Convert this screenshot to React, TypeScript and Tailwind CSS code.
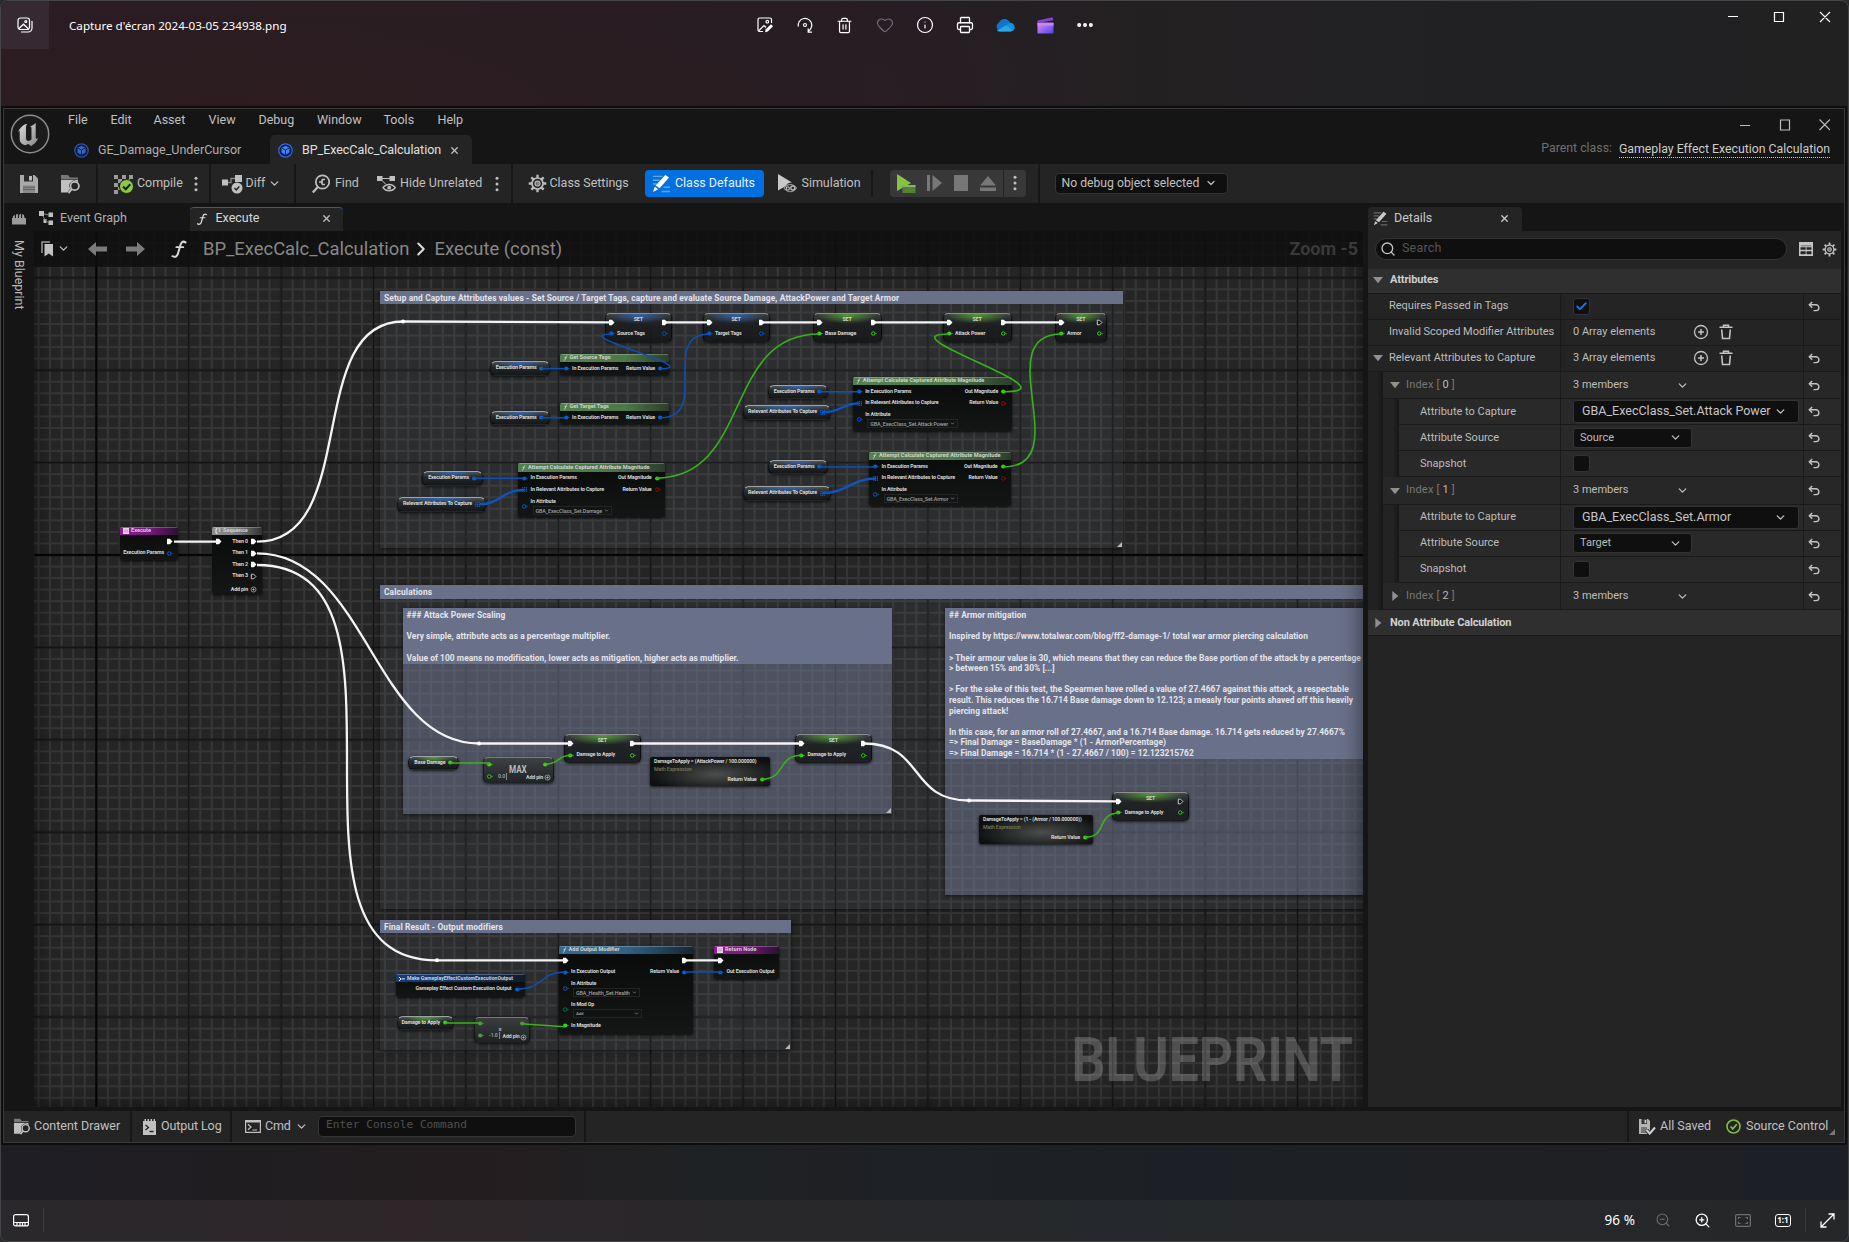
import React from "react";
import {
  ChevronDown,
  ChevronRight,
  Heart,
  Info,
  Printer,
  Trash2,
  ZoomIn,
  ZoomOut,
  Search,
  X,
  Ellipsis,
  Check,
} from "lucide-react";

/* ------------------------------------------------------------------ */
/* Graph data: every node lives at its own place on the free canvas    */
/* ------------------------------------------------------------------ */

const BLUE = "#0a5fd6";
const GREEN = "#35d510";
const RED = "#8e0b0b";
const TEAL = "#06735f";

type PinKind = "exec" | "execOpen" | "dot" | "open" | "array" | "add";

function Pin({ kind, color = "#fff" }: { kind: PinKind; color?: string }) {
  return (
    <svg className="h-[7px] w-[7px] shrink-0 overflow-visible" viewBox="0 0 7 7">
      {kind === "exec" && <path d="M1 .8h2.900L6.500 3.5 3.900 6.200H1z" fill="#fff" />}
      {kind === "execOpen" && <path d="M1.3 1.2h2.3L5.9 3.5 3.6 5.8H1.3z" fill="#111" stroke="#ddd" strokeWidth=".9" />}
      {kind === "dot" && (
        <>
          <circle cx="3.2" cy="3.5" r="2.1" fill={color} />
          <path d="M5.4 2.4 6.9 3.5 5.4 4.6z" fill={color} />
        </>
      )}
      {kind === "open" && (
        <>
          <circle cx="3.2" cy="3.5" r="1.7" fill="#0a0a0a" stroke={color} strokeWidth="1" />
          <path d="M5.5 2.6 6.9 3.5 5.5 4.4z" fill={color} />
        </>
      )}
      {kind === "array" &&
        [1.2, 3, 4.8].map((x) => [1.7, 3.4, 5.1].map((y) => <rect key={x + "-" + y} x={x} y={y - 0.5} width="1.2" height="1.2" fill={color} />))}
      {kind === "add" && (
        <>
          <circle cx="3.5" cy="3.5" r="2.5" fill="none" stroke="#bbb" strokeWidth=".7" />
          <path d="M3.5 2.2v2.6M2.2 3.5h2.6" stroke="#bbb" strokeWidth=".7" />
        </>
      )}
    </svg>
  );
}

function Box({
  x,
  y,
  w,
  h,
  className,
  children,
}: {
  x: number;
  y: number;
  w: number;
  h: number;
  className?: string;
  children?: React.ReactNode;
}) {
  return (
    <div className={"absolute " + (className ?? "")} style={{ left: x, top: y, width: w, height: h }}>
      {children}
    </div>
  );
}

type Side = { kind: PinKind; color?: string; label?: string };

function Row({ l, r }: { l?: Side; r?: Side }) {
  return (
    <div className="flex h-[11.6px] items-center justify-between pr-[4.5px] pl-[3px]">
      <span className="flex items-center gap-[2.5px]">
        {l && <Pin kind={l.kind} color={l.color} />}
        {l?.label}
      </span>
      <span className="flex items-center gap-[2px]">
        {r?.label}
        {r && <Pin kind={r.kind} color={r.color} />}
      </span>
    </div>
  );
}

function FieldRow({ label, value, color, wide }: { label: string; value: string; color: string; wide?: boolean }) {
  return (
    <div className="flex h-[21px] items-center gap-[2.5px] pl-[3px]">
      <Pin kind="open" color={color} />
      <div className="flex flex-col">
        <span className="h-[9px] leading-[9px]">{label}</span>
        <span
          className={
            "ml-[2px] flex h-[9px] items-center justify-between gap-[2px] border border-[#232423] px-[2px] font-medium text-[#a0a0a0] " +
            (wide ? "w-[69px] text-[4.4px]" : "text-[5.4px]")
          }
        >
          {value}
          <ChevronDown size={5} strokeWidth={3} />
        </span>
      </div>
    </div>
  );
}

const headerTones = {
  green: "bg-[linear-gradient(90deg,#54804f_0%,#4d7849_60%,#2c3d2a_100%)]",
  blue: "bg-[linear-gradient(90deg,#356a8f_0%,#2f6488_50%,#17262f_100%)]",
  navy: "bg-[linear-gradient(90deg,#173c7c_0%,#143263_60%,#101a2a_100%)]",
  purple: "bg-[linear-gradient(90deg,#8b1c93_0%,#79177f_50%,#2a112d_100%)]",
  gray: "bg-[linear-gradient(90deg,#8d8d8d_0%,#7d7d7d_50%,#323232_100%)]",
};

function FnNode({
  x,
  y,
  w,
  h,
  title,
  tone,
  icon = "f",
  children,
}: {
  x: number;
  y: number;
  w: number;
  h: number;
  title: string;
  tone: keyof typeof headerTones;
  icon?: "f" | "event" | "seq" | "make";
  children: React.ReactNode;
}) {
  return (
    <Box
      x={x}
      y={y}
      w={w}
      h={h}
      className="overflow-hidden rounded-[2px] bg-[linear-gradient(180deg,#090b0a,#131614)] font-bold text-[#d8d8d8] shadow-[0_1px_3px_rgba(0,0,0,0.8)]"
    >
      <div
        className={
          "mb-[1px] flex h-[8.3px] items-center gap-[2px] border-t border-white/25 pl-[3px] text-[#d0d4d0] " +
          (icon === "make" ? "text-[5.1px] " : "text-[5.6px] ") +
          headerTones[tone]
        }
      >
        {icon === "f" && (
          <svg className="h-[6px] w-[5px]" viewBox="0 0 5 6">
            <path d="M4.3.8C3.2.5 3 1.2 2.6 3S1.8 5.6.8 5.2M1.5 2.6h2.2" stroke="#cfd8cf" strokeWidth=".8" fill="none" />
          </svg>
        )}
        {icon === "event" && (
          <svg className="h-[6px] w-[6px]" viewBox="0 0 6 6">
            <path d="M0 0h6v6H0z" fill="#e6d6e8" />
            <path d="M.8 2h4.4M.8 3.8h4.4" stroke="#a86fae" strokeWidth=".6" />
          </svg>
        )}
        {icon === "seq" && (
          <svg className="h-[6px] w-[6px]" viewBox="0 0 6 6">
            <path d="M2.6.8H1v4.4h1.6M3.6 1h1.8M3.6 3h1.8" stroke="#eee" strokeWidth="1" fill="none" />
          </svg>
        )}
        {icon === "make" && (
          <svg className="h-[6px] w-[6px]" viewBox="0 0 6 6">
            <path d="M0 1l2 2-2 2M2.5 2.9H6" stroke="#eee" strokeWidth="1" fill="none" />
          </svg>
        )}
        <span className="leading-none whitespace-nowrap">{title}</span>
      </div>
      <div className="text-[5.3px] tracking-[-0.025em] whitespace-nowrap">{children}</div>
    </Box>
  );
}

function SetNode({
  x,
  y,
  w,
  label,
  color,
  openExec,
}: {
  x: number;
  y: number;
  w: number;
  label: string;
  color: string;
  openExec?: boolean;
}) {
  return (
    <Box
      x={x}
      y={y}
      w={w}
      h={28.5}
      className="overflow-hidden rounded-[5px] border border-black/60 border-t-white/50 bg-[linear-gradient(180deg,rgba(62,66,66,0.95)_0%,rgba(28,30,31,0.9)_35%,rgba(20,22,23,0.85)_100%)] text-[5.3px] font-bold tracking-[-0.025em] text-[#d8d8d8] shadow-[0_1px_3px_rgba(0,0,0,0.7)]"
    >
      <div
        className={
          "absolute inset-x-[3px] top-0 h-[10px] " +
          (color === BLUE
            ? "bg-[radial-gradient(ellipse_at_top,rgba(50,105,190,0.85),transparent_70%)]"
            : "bg-[radial-gradient(ellipse_at_top,rgba(85,175,50,0.85),transparent_70%)]")
        }
      />
      <div className="absolute inset-x-0 top-[1.5px] text-center leading-[6px] text-[#d5d5d5]">SET</div>
      <div className="relative -mx-[1px] pt-[2.6px] whitespace-nowrap">
        <Row l={{ kind: "exec" }} r={{ kind: openExec ? "execOpen" : "exec" }} />
        <Row l={{ kind: "dot", color, label }} r={{ kind: "open", color }} />
      </div>
    </Box>
  );
}

function Pill({ x, y, w, label, color, array }: { x: number; y: number; w: number; label: string; color: string; array?: boolean }) {
  return (
    <Box
      x={x}
      y={y}
      w={w}
      h={14.5}
      className="flex items-center justify-end gap-[1.5px] rounded-[6px] border border-black/50 border-t-white/60 bg-[linear-gradient(180deg,#4a4f52_0%,#24282a_40%,#14181a_100%)] pr-[4px] text-[5.3px] font-bold tracking-[-0.025em] whitespace-nowrap text-[#dcdcdc] shadow-[0_1px_3px_rgba(0,0,0,0.7)]"
    >
      <div
        className={
          "absolute inset-x-[6px] top-0 h-[7px] " +
          (color === BLUE
            ? "bg-[radial-gradient(ellipse_at_top,rgba(50,105,190,0.85),transparent_70%)]"
            : "bg-[radial-gradient(ellipse_at_top,rgba(85,175,50,0.85),transparent_70%)]")
        }
      />
      <span className="relative">{label}</span>
      <Pin kind={array ? "array" : "dot"} color={color} />
    </Box>
  );
}

function MathNode({ x, y, w, title }: { x: number; y: number; w: number; title: string }) {
  return (
    <Box
      x={x}
      y={y}
      w={w}
      h={29}
      className="flex flex-col rounded-[2px] bg-[radial-gradient(ellipse_at_55%_60%,#4b4e4c_0%,#2a2d2b_38%,#0e100f_75%)] px-[4px] pt-[1px] text-[5.3px] font-bold tracking-[-0.025em] whitespace-nowrap text-[#d8d8d8] shadow-[0_1px_3px_rgba(0,0,0,0.8)]"
    >
      <span className="text-[5.1px] leading-[7px]">{title}</span>
      <span className="leading-[8px] font-medium text-[#77775a]">Math Expression</span>
      <span className="mt-[2.5px] flex items-center justify-end gap-[2px] leading-[7px]">
        Return Value
        <Pin kind="dot" color={GREEN} />
      </span>
    </Box>
  );
}

function OpNode({
  x,
  y,
  w,
  h,
  symbol,
  value,
  small,
}: {
  x: number;
  y: number;
  w: number;
  h: number;
  symbol: string;
  value: string;
  small?: boolean;
}) {
  return (
    <Box
      x={x}
      y={y}
      w={w}
      h={h}
      className="overflow-hidden rounded-[5px] border border-black/50 border-t-white/40 bg-[linear-gradient(180deg,rgba(60,63,64,0.9),rgba(30,33,34,0.92))] text-[5.2px] font-bold tracking-[-0.025em] whitespace-nowrap text-[#d0d0d0] shadow-[0_1px_3px_rgba(0,0,0,0.7)]"
    >
      <div className={"absolute inset-0 flex items-center justify-center leading-none text-[#b9b9b9] " + (small ? "pt-[1px] pr-[3px] text-[8px]" : "pr-[1px] text-[11px]")}>
        <span className="scale-x-[0.74]">{symbol}</span>
      </div>
      <div className="relative -mx-[1px] pt-[0.5px]">
        <Row l={{ kind: "dot", color: small ? "#4f9a3c" : GREEN }} r={{ kind: "dot", color: small ? "#4f9a3c" : GREEN }} />
        <div className="flex h-[12px] items-center pr-[3px] pl-[3px]">
          <Pin kind={small ? "dot" : "open"} color={small ? "#4f9a3c" : GREEN} />
          <span className="ml-[5px] border-r border-[#888] pr-[1px] leading-[7px] font-medium text-[#aaa]">{value}</span>
          <span className="ml-auto flex items-center gap-[0.5px] pt-[3px]">
            Add pin <Pin kind="add" />
          </span>
        </div>
      </div>
    </Box>
  );
}

function Comment({
  x,
  y,
  w,
  h,
  head,
  strong,
  lines,
}: {
  x: number;
  y: number;
  w: number;
  h: number;
  head: number;
  strong?: boolean;
  lines: string[];
}) {
  return (
    <Box
      x={x}
      y={y}
      w={w}
      h={h}
      className={"shadow-[0_1px_4px_rgba(0,0,0,0.6)] " + (strong ? "bg-[rgba(112,120,145,0.5)]" : "bg-[rgba(105,115,140,0.1)]")}
    >
      <div
        className={
          "overflow-hidden bg-[#697089] pt-[2.2px] pl-[4px] text-[8.4px] leading-[10.6px] font-bold whitespace-pre text-[#e4e5ea] " +
          (strong ? "tracking-[0.007em]" : "tracking-[0.014em]")
        }
        style={{ height: head }}
      >
        {lines.map((t, i) => (
          <div key={i} className="h-[10.6px]">
            {t}
          </div>
        ))}
      </div>
      <svg className="absolute right-[1px] bottom-[1px] h-[5px] w-[5px]" viewBox="0 0 5 5">
        <path d="M5 0v5H0z" fill="#b8b8b8" />
      </svg>
    </Box>
  );
}

function Grid() {
  return (
    <svg className="absolute inset-0 h-full w-full" width="1329" height="876">
      <defs>
        <pattern id="minor" x="62.3" y="324" width="11.55" height="11.55" patternUnits="userSpaceOnUse">
          <path d="M0 0H11.55M0 0V11.55M0 11.55H11.55M11.55 0V11.55" stroke="#363636" strokeWidth="2" />
        </pattern>
        <pattern id="major" x="16.1" y="277.8" width="92.4" height="92.4" patternUnits="userSpaceOnUse">
          <path d="M46.2 0V92.4M0 46.2H92.4" stroke="#121212" strokeWidth="1.8" />
        </pattern>
      </defs>
      <rect width="1329" height="876" fill="#252525" />
      <rect width="1329" height="876" fill="url(#minor)" />
      <rect width="1329" height="876" fill="url(#major)" />
      <path d="M62.3 0V876M0 324H1329" stroke="#050505" strokeWidth="2" />
    </svg>
  );
}

const execWires = [
  "M174 541.7H219",
  "M257 541.7C361 541.7 303 321.5 403 321.5L612 322.3",
  "M257 553.3C366 553.3 374 743.5 479 743.5H571",
  "M257 565C437 565 257 960.3 437 960.3H565",
  "M664 322.3H710",
  "M762 322.3H819",
  "M874 322.3H949",
  "M1004 322.3H1062",
  "M632 743.5H802",
  "M864 743.5C925 743.5 908 800.5 969 800.5L1119 801.3",
  "M685 960.3H721",
];
const greenWires = [
  "M656 478C752 478 723 334 819 334",
  "M1004 391.7C1078 391.7 882 334 949 334",
  "M1003 467C1078 467 987 334 1062 334",
  "M450 763H490",
  "M546 764C560 764 557 755.3 571 755.3",
  "M761 779.3C787 779.3 776 755.3 802 755.3",
  "M1085 837.3C1108 837.3 1096 813 1119 813",
  "M445 1023H480",
  "M524 1024L565 1026.7",
];
const blueWires = [
  "M660 368.7C708 368.7 564 334 612 334",
  "M660 417.8C712 417.8 658 334 710 334",
  "M542 368.6H566",
  "M542 417.8H566",
  "M474 478.2H524",
  "M819 391.7H859",
  "M819 467H876",
  "M518 989C543 989 540 972 565 972",
  "M685 972H721",
];
const thickBlueWires = [
  "M480 504.3C500 504.3 502 490 524 490",
  "M823 412.3C841 412.3 842 403.4 859 403.4",
  "M823 493C846 493 852 478.5 876 478.5",
];

function Wires() {
  return (
    <svg className="absolute top-0 left-0 h-[1242px] w-[1849px]" viewBox="0 0 1849 1242" fill="none">
      {blueWires.map((d) => (
        <path key={d} d={d} stroke="#0b51b4" strokeWidth="1.5" />
      ))}
      {thickBlueWires.map((d) => (
        <path key={d} d={d} stroke="#0b56c4" strokeWidth="2.4" />
      ))}
      {greenWires.map((d) => (
        <path key={d} d={d} stroke="#36b416" strokeWidth="1.6" />
      ))}
      {execWires.map((d) => (
        <path key={d} d={d} stroke="#f4f4f4" strokeWidth="2.3" />
      ))}
      <g fill="#fff">
        <circle cx="403" cy="321.5" r="2" />
        <circle cx="479" cy="743.5" r="2" />
        <circle cx="437" cy="960.3" r="2" />
        <circle cx="969" cy="800.5" r="2" />
      </g>
    </svg>
  );
}

function AttemptNode({ x, y, w, h, attr }: { x: number; y: number; w: number; h: number; attr: string }) {
  return (
    <FnNode x={x} y={y} w={w} h={h} tone="green" title="Attempt Calculate Captured Attribute Magnitude">
      <Row l={{ kind: "dot", color: BLUE, label: "In Execution Params" }} r={{ kind: "dot", color: GREEN, label: "Out Magnitude" }} />
      <Row l={{ kind: "array", color: BLUE, label: "In Relevant Attributes to Capture" }} r={{ kind: "open", color: RED, label: "Return Value" }} />
      <FieldRow label="In Attribute" value={attr} color={BLUE} />
    </FnNode>
  );
}

function GraphCanvas() {
  return (
    <div className="relative h-[876px] overflow-hidden bg-[#252525]">
      <Grid />
      {/* node space */}
      <div className="absolute -top-[231px] -left-[34px] h-[1242px] w-[1849px]">
        <Comment
          x={380}
          y={291}
          w={743}
          h={257}
          head={13}
          lines={["Setup and Capture Attributes values - Set Source / Target Tags, capture and evaluate Source Damage, AttackPower and Target Armor"]}
        />
        <Comment x={380} y={585} w={1060} h={324} head={13.5} lines={["Calculations"]} />
        <Comment
          x={402.5}
          y={608}
          w={489.5}
          h={206}
          head={55.5}
          strong
          lines={[
            "### Attack Power Scaling",
            "",
            "Very simple, attribute acts as a percentage multiplier.",
            "",
            "Value of 100 means no modification, lower acts as mitigation, higher acts as multiplier.",
          ]}
        />
        <Comment
          x={945}
          y={608}
          w={470}
          h={287}
          head={151}
          strong
          lines={[
            "## Armor mitigation",
            "",
            "Inspired by https://www.totalwar.com/blog/ff2-damage-1/ total war armor piercing calculation",
            "",
            "> Their armour value is 30, which means that they can reduce the Base portion of the attack by a percentage",
            "> between 15% and 30% [...]",
            "",
            "> For the sake of this test, the Spearmen have rolled a value of 27.4667 against this attack, a respectable",
            "result. This reduces the 16.714 Base damage down to 12.123; a measly four points shaved off this heavily",
            "piercing attack!",
            "",
            "In this case, for an armor roll of 27.4667, and a 16.714 Base damage. 16.714 gets reduced by 27.4667%",
            "=> Final Damage = BaseDamage * (1 - ArmorPercentage)",
            "=> Final Damage = 16.714 * (1 - 27.4667 / 100) = 12.123215762",
          ]}
        />
        <Comment x={380} y={920} w={411} h={130} head={13} lines={["Final Result - Output modifiers"]} />

        <FnNode x={120} y={526.5} w={57.5} h={33.5} tone="purple" icon="event" title="Execute">
          <Row r={{ kind: "exec" }} />
          <Row r={{ kind: "open", color: BLUE, label: "Execution Params" }} />
        </FnNode>
        <FnNode x={212} y={526.5} w={49.5} h={67.5} tone="gray" icon="seq" title="Sequence">
          <Row l={{ kind: "exec" }} r={{ kind: "exec", label: "Then 0" }} />
          <Row r={{ kind: "exec", label: "Then 1" }} />
          <Row r={{ kind: "exec", label: "Then 2" }} />
          <Row r={{ kind: "execOpen", label: "Then 3" }} />
          <div className="pt-[1.5px]">
            <Row r={{ kind: "add", label: "Add pin" }} />
          </div>
        </FnNode>

        <SetNode x={604.5} y={313} w={67.5} label="Source Tags" color={BLUE} />
        <SetNode x={702.5} y={313} w={67} label="Target Tags" color={BLUE} />
        <SetNode x={812.5} y={313} w={69} label="Base Damage" color={GREEN} />
        <SetNode x={942.5} y={313} w={69} label="Attack Power" color={GREEN} />
        <SetNode x={1054.5} y={313} w={52.5} label="Armor" color={GREEN} openExec />

        <Pill x={489.5} y={361} w={60.5} label="Execution Params" color={BLUE} />
        <Pill x={489.5} y={410.5} w={60.5} label="Execution Params" color={BLUE} />
        <Pill x={421.5} y={471} w={61} label="Execution Params" color={BLUE} />
        <Pill x={397} y={497} w={88.5} label="Relevant Attributes To Capture" color={BLUE} array />
        <Pill x={767.5} y={384.5} w={60.5} label="Execution Params" color={BLUE} />
        <Pill x={742.5} y={405} w={88} label="Relevant Attributes To Capture" color={BLUE} array />
        <Pill x={767.5} y={459.5} w={60.5} label="Execution Params" color={BLUE} />
        <Pill x={742.5} y={486} w={88} label="Relevant Attributes To Capture" color={BLUE} array />

        <FnNode x={559.5} y={353.5} w={109} h={21.5} tone="green" title="Get Source Tags">
          <Row l={{ kind: "dot", color: BLUE, label: "In Execution Params" }} r={{ kind: "dot", color: BLUE, label: "Return Value" }} />
        </FnNode>
        <FnNode x={559.5} y={402.5} w={109} h={21.5} tone="green" title="Get Target Tags">
          <Row l={{ kind: "dot", color: BLUE, label: "In Execution Params" }} r={{ kind: "dot", color: BLUE, label: "Return Value" }} />
        </FnNode>
        <AttemptNode x={518} y={463.3} w={147} h={54} attr="GBA_ExecClass_Set.Damage" />
        <AttemptNode x={852.7} y={376.5} w={159} h={54.5} attr="GBA_ExecClass_Set.Attack Power" />
        <AttemptNode x={869} y={451.5} w={142} h={54.5} attr="GBA_ExecClass_Set.Armor" />

        <Pill x={408} y={755.5} w={51} label="Base Damage" color={GREEN} />
        <OpNode x={483} y={757} w={70.5} h={25.5} symbol="MAX" value="0.0" />
        <SetNode x={564} y={734.3} w={76.5} label="Damage to Apply" color={GREEN} />
        <MathNode x={650} y={757} w={119.5} title="DamageToApply = (AttackPower / 100.000000)" />
        <SetNode x={795} y={734.3} w={76.5} label="Damage to Apply" color={GREEN} />
        <MathNode x={979} y={815} w={114} title="DamageToApply = (1 - (Armor / 100.000000))" />
        <SetNode x={1112.3} y={792} w={76.5} label="Damage to Apply" color={GREEN} openExec />

        <FnNode x={396} y={974} w={129} h={22.5} tone="navy" icon="make" title="Make GameplayEffectCustomExecutionOutput">
          <Row r={{ kind: "dot", color: BLUE, label: "Gameplay Effect Custom Execution Output" }} />
        </FnNode>
        <Pill x={396.5} y={1015.7} w={57} label="Damage to Apply" color={GREEN} />
        <OpNode x={474} y={1016.5} w={56} h={26} symbol="×" value="-1.0" small />
        <FnNode x={558.5} y={945.5} w={134} h={88} tone="blue" title="Add Output Modifier">
          <Row l={{ kind: "exec" }} r={{ kind: "exec" }} />
          <Row l={{ kind: "dot", color: BLUE, label: "In Execution Output" }} r={{ kind: "dot", color: BLUE, label: "Return Value" }} />
          <FieldRow label="In Attribute" value="GBA_Health_Set.Health" color={BLUE} />
          <FieldRow label="In Mod Op" value="Add" color={TEAL} wide />
          <Row l={{ kind: "dot", color: GREEN, label: "In Magnitude" }} />
        </FnNode>
        <FnNode x={714} y={945.5} w={65} h={33.5} tone="purple" icon="event" title="Return Node">
          <Row l={{ kind: "exec" }} />
          <Row l={{ kind: "dot", color: BLUE, label: "Out Execution Output" }} />
        </FnNode>
        <Wires />
      </div>

      <div className="pointer-events-none absolute inset-0 shadow-[inset_0_0_22px_rgba(0,0,0,0.55)]" />
      <div className="absolute right-[10px] bottom-[11px] origin-right scale-x-[0.861] text-[62px] leading-[73px] font-bold whitespace-nowrap text-white/20">
        BLUEPRINT
      </div>

      {/* breadcrumb overlay */}
      <div className="absolute inset-x-0 top-0 flex h-[36px] items-center bg-[rgba(13,13,13,0.82)] pb-[1px] text-[18.4px] text-[#888]">
        <div className="flex w-[45px] items-center gap-[4px] pl-[7px]">
          <svg width="12" height="16" viewBox="0 0 12 16">
            <path d="M1 12V1h8" stroke="#999" strokeWidth="1.5" fill="none" />
            <path d="M3.5 3H12v12.500l-4.200-3-4.300 3z" fill="#c0c0c0" />
          </svg>
          <ChevronDown size={13} strokeWidth={2.5} className="text-[#bbb]" />
        </div>
        <div className="flex w-[87px] items-center gap-[19px] pl-[9px]">
          <svg width="19" height="14" viewBox="0 0 19 14">
            <path d="M0 7 8 0v4.500h11v5H8V14z" fill="#7b7b7b" />
          </svg>
          <svg width="19" height="14" viewBox="0 0 19 14">
            <path d="M19 7l-8-7v4.500H0v5h11V14z" fill="#7b7b7b" />
          </svg>
        </div>
        <div className="w-[37px] pl-[4px]">
          <FnGlyph size={18} />
        </div>
        <span className="w-[207px] whitespace-nowrap">BP_ExecCalc_Calculation</span>
        <span className="flex w-[24.500px] text-[#ddd]">
          <ChevronRight size={22} strokeWidth={2.2} />
        </span>
        <span className="whitespace-nowrap">Execute (const)</span>
        <span className="mr-[5px] ml-auto text-[18px] font-bold text-[#3a3a3a]">Zoom -5</span>
      </div>
    </div>
  );
}

/* ------------------------------------------------------------------ */
/* Small glyphs                                                        */
/* ------------------------------------------------------------------ */

function FnGlyph({ size }: { size: number }) {
  return (
    <svg width={size} height={size} viewBox="0 0 18 18" fill="none" stroke="#d8d8d8" strokeLinecap="round">
      <path d="M15.500 2.400C12.500.4 11 2.500 10 6.500L8.300 12.500C7.300 16.500 5.500 17.800 2.500 16.200" strokeWidth="2" />
      <path d="M6.300 7.200h7" strokeWidth="1.700" />
    </svg>
  );
}

function ClassIcon({ dim }: { dim?: boolean }) {
  return (
    <svg width="15" height="15" viewBox="0 0 15 15" className={dim ? "opacity-75" : ""}>
      <circle cx="7.500" cy="7.500" r="6.700" fill="#0b1b3d" stroke="#2d6be8" strokeWidth="1.200" />
      <path d="M7.500 2.800l4 2v4.800l-4 2.400-4-2.400V4.800z" fill="#3f82ff" />
      <path d="M3.700 5l3.800 2 3.800-2M7.500 7v4.800" stroke="#0b1b3d" strokeWidth=".9" fill="none" />
    </svg>
  );
}

function Dots() {
  return (
    <svg width="4" height="16" viewBox="0 0 4 16" fill="#c0c0c0">
      <circle cx="2" cy="2.200" r="1.500" />
      <circle cx="2" cy="8" r="1.500" />
      <circle cx="2" cy="13.800" r="1.500" />
    </svg>
  );
}

function Gear({ size }: { size: number }) {
  return (
    <svg width={size} height={size} viewBox="0 0 20 20" fill="none" stroke="#c0c0c0">
      <circle cx="10" cy="10" r="5.800" strokeWidth="1.800" />
      <circle cx="10" cy="10" r="2.600" strokeWidth="1.200" fill="#777" />
      <path
        d="M10 .8v3.200M10 16v3.200M.8 10H4M16 10h3.200M3.500 3.500l2.200 2.200M14.300 14.300l2.200 2.200M3.500 16.500l2.200-2.200M14.300 5.700l2.200-2.200"
        strokeWidth="2.400"
      />
    </svg>
  );
}

function FolderSearch({ size }: { size: number }) {
  return (
    <svg width={size} height={size} viewBox="0 0 20 20">
      <path d="M0 1h7l2 2.500h8V5H0z" fill="#777" />
      <path d="M0 5.800h17v2.600a5 5 0 0 0-7.800 6.200L6.500 18.500H0z" fill="#c0c0c0" />
      <circle cx="13.700" cy="12" r="4.200" fill="none" stroke="#c0c0c0" strokeWidth="1.700" />
      <path d="M10.700 15.200 7.500 19" stroke="#c0c0c0" strokeWidth="2" />
    </svg>
  );
}

function PencilLines({ size, bright }: { size: number; bright?: boolean }) {
  const c = bright ? "#fff" : "#c8c8c8";
  const l = bright ? "#5fa6f5" : "#666";
  return (
    <svg width={size} height={size} viewBox="0 0 20 20">
      <path d="M1 2.500h10M1 6.500h7M12 14h7M10 18.500h9M1 10.500h4" stroke={l} strokeWidth="1.500" />
      <path d="M14 1l4 2.800L8 15l-4.200-2.800z" fill={c} />
      <path d="M3 13.500 6.500 16 1 19z" fill={c} />
    </svg>
  );
}

function Floppy({ size }: { size: number }) {
  return (
    <svg width={size} height={size} viewBox="0 0 18 18">
      <path d="M0 0h14.500L18 3.500V18H0z" fill="#aaa" />
      <path d="M4 0h9v6.500H4z" fill="#2a2a2a" />
      <path d="M9 1h3v4.500H9z" fill="#bbb" />
      <path d="M3 10.500h12V18H3z" fill="#8a8a8a" />
      <path d="M3 12.200h12M3 14.500h12" stroke="#555" strokeWidth=".8" />
    </svg>
  );
}

function Tri({ open }: { open?: boolean }) {
  return (
    <svg width="10" height="10" viewBox="0 0 10 10" fill="#909090" className="shrink-0">
      {open ? <path d="M0 2h10L5 8.300z" /> : <path d="M2.300 0v10L8.300 5z" />}
    </svg>
  );
}

function Undo() {
  return (
    <svg width="12" height="11" viewBox="0 0 12 11" fill="none" stroke="#c4c4c4" strokeWidth="1.400">
      <path d="M1.500 3.800H8a2.900 2.900 0 0 1 0 5.800H5.500" />
      <path d="M4.200.9 1.300 3.800l2.900 2.900" />
    </svg>
  );
}

/* ------------------------------------------------------------------ */
/* Details panel                                                       */
/* ------------------------------------------------------------------ */

type DetailRow = {
  h: string;
  level: 0 | 1 | 2;
  label: React.ReactNode;
  arrow?: "open" | "closed";
  value: React.ReactNode;
  undo?: boolean;
};

function Combo({ text, big }: { text: string; big?: boolean }) {
  return big ? (
    <div className="flex h-[23px] w-[226px] items-center justify-between rounded-[3px] border border-[#333] bg-[#0f0f0f] pr-[11px] pl-[8px] text-[12.5px] whitespace-nowrap text-[#c6c6c6]">
      {text}
      <ChevronDown size={13} strokeWidth={2.4} className="shrink-0" />
    </div>
  ) : (
    <div className="flex h-[20px] w-[119px] items-center justify-between rounded-[3px] border border-[#333] bg-[#0f0f0f] pr-[9px] pl-[6px]">
      {text}
      <ChevronDown size={13} strokeWidth={2.4} />
    </div>
  );
}

function CheckBox({ on }: { on?: boolean }) {
  return (
    <div className="flex h-[17px] w-[17px] items-center justify-center rounded-[3px] border border-[#333] bg-[#0f0f0f]">
      {on && <Check size={13} strokeWidth={3.4} className="text-[#0f7be8]" />}
    </div>
  );
}

function ArrayValue({ n }: { n: number }) {
  return (
    <div className="flex items-center">
      <span className="w-[119.500px]">{n} Array elements</span>
      <svg width="16" height="16" viewBox="0 0 16 16" fill="none" stroke="#c4c4c4">
        <circle cx="8" cy="8" r="6.500" strokeWidth="1.300" />
        <path d="M8 5v6M5 8h6" strokeWidth="1.500" />
      </svg>
      <svg width="14" height="16" viewBox="0 0 14 16" fill="none" stroke="#c4c4c4" className="ml-[10px]">
        <path d="M.5 3.200h13M4.500 3V1.300h5V3" strokeWidth="1.500" />
        <path d="M2.700 5.500 3.500 14.500h7L11.300 5.500" strokeWidth="1.600" />
      </svg>
    </div>
  );
}

function Members() {
  return (
    <div className="flex items-center">
      <span className="w-[103px]">3 members</span>
      <ChevronDown size={13} strokeWidth={2.4} />
    </div>
  );
}

function IndexLabel({ n }: { n: number }) {
  return (
    <span className="tracking-[0.200px] text-[#777]">
      Index [ <span className="text-[#bbb]">{n}</span> ]
    </span>
  );
}

const detailRows: DetailRow[] = [
  { h: "h-[26.300px]", level: 0, label: "Requires Passed in Tags", value: <CheckBox on />, undo: true },
  { h: "h-[26px]", level: 0, label: "Invalid Scoped Modifier Attributes", value: <ArrayValue n={0} /> },
  { h: "h-[26px]", level: 0, label: "Relevant Attributes to Capture", arrow: "open", value: <ArrayValue n={3} />, undo: true },
  { h: "h-[27.500px]", level: 1, label: <IndexLabel n={0} />, arrow: "open", value: <Members />, undo: true },
  { h: "h-[26px]", level: 2, label: "Attribute to Capture", value: <Combo big text="GBA_ExecClass_Set.Attack Power" />, undo: true },
  { h: "h-[26px]", level: 2, label: "Attribute Source", value: <Combo text="Source" />, undo: true },
  { h: "h-[26px]", level: 2, label: "Snapshot", value: <CheckBox />, undo: true },
  { h: "h-[27.500px]", level: 1, label: <IndexLabel n={1} />, arrow: "open", value: <Members />, undo: true },
  { h: "h-[26px]", level: 2, label: "Attribute to Capture", value: <Combo big text="GBA_ExecClass_Set.Armor" />, undo: true },
  { h: "h-[26px]", level: 2, label: "Attribute Source", value: <Combo text="Target" />, undo: true },
  { h: "h-[26px]", level: 2, label: "Snapshot", value: <CheckBox />, undo: true },
  { h: "h-[27.700px]", level: 1, label: <IndexLabel n={2} />, arrow: "closed", value: <Members />, undo: true },
];

function Details() {
  return (
    <div className="flex w-[473px] flex-col">
      <div className="flex h-[24px] w-[154px] items-center rounded-t-[4px] bg-[#242424] pb-[2px] text-[12.500px] text-[#c8c8c8]">
        <span className="w-[26px] pl-[5px]">
          <PencilLines size={15} />
        </span>
        <span className="w-[105px]">Details</span>
        <X size={11} strokeWidth={3} />
      </div>
      <div className="flex h-[876px] flex-col bg-[#242424]">
        <div className="flex h-[37.500px] items-center pb-[1.500px] pl-[7px]">
          <div className="flex h-[22px] w-[412px] items-center rounded-full border border-[#343434] bg-[#0f0f0f] pl-[4px] text-[12.500px] text-[#555]">
            <Search size={16} strokeWidth={2} className="mr-[6px] text-[#c4c4c4]" />
            <span className="pb-[2px] tracking-[0.200px]">Search</span>
          </div>
          <svg width="14" height="14" viewBox="0 0 14 14" className="ml-[12px]">
            <path d="M0 0h14v14H0z" fill="#c4c4c4" />
            <path d="M1.800 3.800h10.400M1.800 5.500h4.600v2H1.800zM7.800 5.500h4.400v2H7.800zM1.800 9.500h4.600v2.500H1.800zM7.800 9.500h4.400v2.500H7.800z" fill="#242424" stroke="#242424" strokeWidth=".5" />
          </svg>
          <span className="ml-[9px]">
            <Gear size={15} />
          </span>
        </div>
        <div className="flex h-[25px] items-center gap-[7px] border-b border-[#1a1a1a] bg-[#2f2f2f] pb-[1px] pl-[5px] text-[11px] font-bold text-[#cfcfcf]">
          <Tri open />
          <span className="tracking-[-0.100px]">Attributes</span>
        </div>
        {detailRows.map((r, i) => (
          <div key={i} className={"flex text-[11px] text-[#bdbdbd] " + r.h}>
            {r.level > 0 && <div className="w-[15px] shrink-0 bg-[linear-gradient(90deg,#212121_60%,#171717)]" />}
            {r.level > 1 && <div className="w-[16px] shrink-0 bg-[linear-gradient(90deg,#232323_60%,#171717)]" />}
            <div className={"flex min-w-0 flex-1 border-b border-[#1a1a1a] " + (r.level > 1 ? "bg-[#292929]" : r.level > 0 ? "bg-[#272727]" : "bg-[#242424]")}>
              <div
                className={
                  "flex shrink-0 items-center gap-[6px] border-r border-[#1a1a1a] whitespace-nowrap " +
                  (r.level === 0 ? "w-[193px] pl-[5px]" : r.level === 1 ? "w-[178px] pl-[7px]" : "w-[162px] pl-[5px]")
                }
              >
                {r.arrow ? <Tri open={r.arrow === "open"} /> : <span className="w-[10px]" />}
                {r.label}
              </div>
              <div className="flex w-[243px] items-center border-r border-[#1a1a1a] pl-[12px]">{r.value}</div>
              <div className="flex flex-1 items-center pl-[4px]">{r.undo && <Undo />}</div>
            </div>
          </div>
        ))}
        <div className="flex h-[26px] items-center gap-[7px] border-b border-[#1a1a1a] bg-[#2f2f2f] pl-[5px] text-[11px] font-bold text-[#cfcfcf]">
          <Tri />
          <span className="tracking-[-0.150px]">Non Attribute Calculation</span>
        </div>
      </div>
    </div>
  );
}

/* ------------------------------------------------------------------ */
/* Unreal editor window                                                */
/* ------------------------------------------------------------------ */

function EditorHeader() {
  const menu: [string, string][] = [
    ["File", "w-[42.500px]"],
    ["Edit", "w-[43px]"],
    ["Asset", "w-[55px]"],
    ["View", "w-[50px]"],
    ["Debug", "w-[58.500px]"],
    ["Window", "w-[66.500px]"],
    ["Tools", "w-[54px]"],
    ["Help", "w-[40px]"],
  ];
  return (
    <div className="flex h-[55px] bg-[#151515]">
      <div className="w-[64px] pt-[5px] pl-[6px]">
        <svg width="40" height="40" viewBox="0 0 40 40">
          <defs>
            <linearGradient id="metal" x1="0" y1="0" x2="1" y2="1">
              <stop offset="0" stopColor="#ddd" />
              <stop offset="1" stopColor="#888" />
            </linearGradient>
          </defs>
          <circle cx="20" cy="20" r="18.700" fill="#1b1b1b" stroke="#8d8d8d" strokeWidth="1.500" />
          <path
            d="M7.800 18.800C9.500 13.500 14 10 17.500 9.700 15.800 11.300 16 12.500 16 14v10c0 2 1 3 2.500 3 1 0 2.300-.6 3-1.400V14.500c0-1.500-.6-1.800-1.500-2 2.600-.8 4.800-2.500 6-3.400-.4 1.500-.3 2.500-.3 4v10.500c0 1.500 1.500 1.500 2.500.4C26.500 28.500 23.500 30.500 21 32l-2.500-2-3.500 1.200c-3.500-1-5.300-3.200-5.300-6V16.500c-.8.5-1.400 1.300-1.900 2.300z"
            fill="url(#metal)"
          />
        </svg>
      </div>
      <div className="flex flex-1 flex-col">
        <div className="flex h-[26px] items-center pb-[4px] text-[12.500px] text-[#c0c0c0]">
          {menu.map(([t, w]) => (
            <span key={t} className={w}>
              {t}
            </span>
          ))}
        </div>
        <div className="flex h-[29px] text-[12.500px] text-[#b0b0b0]">
          <div className="flex w-[202px] items-center pt-[1px] pl-[6px]">
            <span className="w-[24px]">
              <ClassIcon dim />
            </span>
            GE_Damage_UnderCursor
          </div>
          <div className="flex w-[202px] items-center rounded-t-[5px] bg-[#242424] pt-[1px] pl-[8px] text-[#e0e0e0]">
            <span className="w-[24px]">
              <ClassIcon />
            </span>
            <span className="w-[147px] tracking-[-0.050px]">BP_ExecCalc_Calculation</span>
            <X size={11} strokeWidth={3} className="text-[#bbb]" />
          </div>
        </div>
      </div>
      <div className="flex w-[400px] flex-col items-end pr-[14px]">
        <svg width="90" height="32" viewBox="0 0 90 32" fill="none" stroke="#bdbdbd" strokeWidth="1.200">
          <path d="M0 16.500h10M40.500 11h9v10h-9zM79.500 10.500l10.500 10.500M90 10.500 79.500 21" />
        </svg>
        <div className="flex gap-[7px] text-[12.300px] leading-[15px]">
          <span className="text-[#707070]">Parent class:</span>
          <span className="mt-[1px] border-b border-dotted border-[#ccc] text-[#cdcdcd]">Gameplay Effect Execution Calculation</span>
        </div>
      </div>
    </div>
  );
}

function Toolbar() {
  return (
    <div className="flex h-[38.500px] items-center bg-[#242424] text-[12.450px] text-[#c0c0c0]">
      <div className="flex h-full w-[94px] items-center gap-[23px] border-r-2 border-[#171717] pt-[1px] pl-[16px]">
        <Floppy size={18} />
        <FolderSearch size={20} />
      </div>
      <div className="flex h-full w-[112.500px] items-center border-r-2 border-[#171717] pt-[1px] pl-[16px]">
        <svg width="20" height="20" viewBox="0 0 20 20">
          <path d="M0 1h4v4H0zM8 1h4v4H8zM15 1h4v4h-4zM4 5h4v4H4zM12 5h4v4h-4zM0 9h4v4H0zM0 16h4v4H0zM4 13h4v3H4z" fill="#9a9a9a" />
          <circle cx="12.500" cy="12.500" r="7" fill="#8fc94a" stroke="#1c1c1c" />
          <path d="M9 12.500l2.700 2.700 4.600-5" stroke="#15220a" strokeWidth="2" fill="none" />
        </svg>
        <span className="ml-[3px] w-[57px]">Compile</span>
        <Dots />
      </div>
      <div className="flex h-full w-[85.500px] items-center border-r-2 border-[#171717] pt-[1px] pl-[11px]">
        <svg width="21" height="20" viewBox="0 0 21 20">
          <path d="M0 5.500h6v6H0zM13 1h7v7h-7z" fill="#c0c0c0" />
          <path d="M6 8.500h3v-4h4" stroke="#888" strokeWidth="1.300" fill="none" />
          <circle cx="15" cy="14" r="5.500" fill="#c0c0c0" />
          <path d="M12.500 14l1.800 1.900 3-3.500" stroke="#222" strokeWidth="1.500" fill="none" />
        </svg>
        <span className="ml-[3px] w-[22px]">Diff</span>
        <ChevronDown size={13} strokeWidth={2.400} />
      </div>
      <div className="flex h-full w-[216.500px] items-center border-r-2 border-[#171717] pt-[1px] pl-[16px]">
        <svg width="18" height="20" viewBox="0 0 18 20" fill="none" stroke="#c0c0c0">
          <circle cx="10.500" cy="8" r="6.700" strokeWidth="1.700" />
          <path d="M5.800 13 .8 18.500" strokeWidth="2.200" />
          <path d="M7 8h3M10 5.500h3M10 10.500h3M10 5.500v5" strokeWidth="1.700" />
        </svg>
        <span className="ml-[5px] w-[42px]">Find</span>
        <svg width="19" height="18" viewBox="0 0 19 18" fill="none" stroke="#c0c0c0">
          <path d="M0 1h5.500v5H0zM12.500 1H18v5h-5.500z" fill="#c0c0c0" stroke="none" />
          <path d="M5 3.500h8M5 5.500l4 4" strokeWidth="1" />
          <path d="M6 12.700c3-4.300 9.500-4.300 12.300 0-3 4.300-9.300 4.300-12.300 0z" strokeWidth="1.300" />
          <circle cx="12.200" cy="12.700" r="1.900" fill="#c0c0c0" stroke="none" />
        </svg>
        <span className="ml-[4px] w-[95px] tracking-[0.050px]">Hide Unrelated</span>
        <Dots />
      </div>
      <div className="flex h-full items-center pt-[0.500px] pl-[15px]">
        <Gear size={19} />
        <span className="ml-[3px] w-[95px]">Class Settings</span>
        <div className="flex h-[27px] w-[119px] items-center rounded-[4px] bg-[#0070e0] pl-[7.500px] whitespace-nowrap text-[#e9f2fc]">
          <PencilLines size={19} bright />
          <span className="ml-[4px]">Class Defaults</span>
        </div>
        <svg width="20" height="20" viewBox="0 0 20 20" className="ml-[14px]">
          <path d="M0 0l14 8.500L0 16.500z" fill="#c8c8c8" />
          <circle cx="13" cy="14" r="5.500" fill="#242424" />
          <path d="M6 14c3-4.500 9-5 12.500 0-3.500 5-9 5-12.500 0z" fill="#242424" stroke="#999" strokeWidth="1.100" />
          <circle cx="9.800" cy="14.400" r="1.600" fill="none" stroke="#bbb" strokeWidth="1.200" />
          <circle cx="14.800" cy="14" r="2" fill="none" stroke="#bbb" strokeWidth="1.300" />
        </svg>
        <span className="ml-[4px] w-[69px]">Simulation</span>
      </div>
      <div className="mr-[17px] h-[27px] w-[2px] bg-[#171717]" />
      <div className="flex h-[27px] w-[136px] items-center rounded-[4px] bg-[#383838] pl-[7px]">
        <svg width="19" height="19" viewBox="0 0 19 19">
          <path d="M0 0l14 9L0 17z" fill="#86c440" />
          <path d="M5.500 11h13v8h-13z" fill="#56803a" />
          <path d="M5.500 11h13v2h-13z" fill="#86b860" />
        </svg>
        <svg width="15" height="16" viewBox="0 0 15 16" className="ml-[11px]" fill="#777">
          <path d="M0 0h3v16H0zM5.500 0 15 8l-9.500 8z" />
        </svg>
        <span className="ml-[12px] h-[16px] w-[14.500px] bg-[#777]" />
        <svg width="16" height="15" viewBox="0 0 16 15" className="ml-[12px]" fill="#777">
          <path d="M8 0l8 9.500H0zM0 11.500h16V15H0z" />
        </svg>
        <span className="mr-[9px] ml-[7px] h-full w-px bg-[#242424]" />
        <Dots />
      </div>
      <div className="mr-[15px] ml-[12px] h-full w-[2px] bg-[#171717]" />
      <div className="flex h-[21px] w-[173px] items-center justify-between rounded-[4px] border border-[#353535] bg-[#0f0f0f] pr-[10px] pl-[6px] text-[12.200px] whitespace-nowrap">
        No debug object selected
        <ChevronDown size={12} strokeWidth={2.400} />
      </div>
    </div>
  );
}

function StatusBar() {
  return (
    <div className="mt-[4px] flex h-[31px] items-center bg-[#242424] text-[12.500px] text-[#c0c0c0]">
      <div className="flex h-full w-[128px] items-center border-r-2 border-[#171717] pl-[10px]">
        <FolderSearch size={17} />
        <span className="ml-[3px]">Content Drawer</span>
      </div>
      <div className="flex h-full w-[100px] items-center border-r-2 border-[#171717] pl-[11px]">
        <svg width="13" height="16" viewBox="0 0 13 16">
          <path d="M0 2h1.500V0H3v2h1.500V0H6v2h1.500V0H9v2h1.500V0H12v2h1v14H0z" fill="#c0c0c0" />
          <path d="M2.500 6l3 2.500-3 2.500M6.500 12.500h4" stroke="#222" strokeWidth="1.300" fill="none" />
        </svg>
        <span className="ml-[5px] tracking-[-0.100px]">Output Log</span>
      </div>
      <div className="flex h-full w-[354px] items-center border-r-2 border-[#171717] pl-[13px]">
        <svg width="16" height="13" viewBox="0 0 16 13" fill="none" stroke="#c0c0c0">
          <rect x=".6" y=".6" width="14.800" height="11.800" strokeWidth="1.200" />
          <path d="M0 1.500h16" strokeWidth="2" />
          <path d="M3 4.300 6 7 3 9.700M7.500 10h4.500" strokeWidth="1.200" />
        </svg>
        <span className="ml-[4px] w-[30px] tracking-[-0.200px]">Cmd</span>
        <ChevronDown size={13} strokeWidth={2.400} />
        <div className="ml-[10px] flex h-[21px] w-[258px] items-center rounded-[4px] border border-[#353535] bg-[#0f0f0f] pb-[2px] pl-[7px] font-['DejaVu_Sans_Mono',monospace] text-[11.150px] text-[#505050]">
          Enter Console Command
        </div>
      </div>
      <div className="ml-auto flex h-full w-[217px] items-center border-l-2 border-[#171717] pl-[10px]">
        <svg width="17" height="16" viewBox="0 0 17 16">
          <path d="M0 0h9l2 2v13H0z" fill="#b5b5b5" />
          <path d="M2.500 0H8v5H2.500z" fill="#333" />
          <path d="M5.500.800h1.800v3.400H5.500z" fill="#ccc" />
          <path d="M2 8h6v6H2z" fill="#777" />
          <path d="M7.500 11l3.200 3.500L16 8.500" stroke="#242424" strokeWidth="4" fill="none" />
          <path d="M7.500 11l3.200 3.500L16 8.500" stroke="#ccc" strokeWidth="2.200" fill="none" />
        </svg>
        <span className="ml-[4px] w-[66px]">All Saved</span>
        <svg width="15" height="15" viewBox="0 0 15 15" fill="none" stroke="#7fbf3f">
          <circle cx="7.500" cy="7.500" r="6.500" strokeWidth="1.600" />
          <path d="M4.500 7.500l2.300 2.400 4-4.600" strokeWidth="1.700" />
        </svg>
        <span className="ml-[5px] whitespace-nowrap">Source Control</span>
        <svg width="6" height="6" viewBox="0 0 6 6" className="mt-[10px] ml-[1px]">
          <path d="M6 0v6H0z" fill="#777" />
        </svg>
      </div>
    </div>
  );
}

function Editor() {
  return (
    <div className="-mt-px mr-[1px] h-[1039px] border-2 border-[#0d0d0d] font-[Roboto,sans-serif]">
      <div className="flex h-full flex-col border border-[#3a3a3a] bg-[#151515]">
        <EditorHeader />
        <Toolbar />
        <div className="flex pt-[4.500px]">
          <div className="flex w-[30px] flex-col items-center pt-[6px]">
            <svg width="14" height="12" viewBox="0 0 14 12">
              <path d="M1 3l2-1V11H.500zM4 1.500l2-.500v10H4zM7 2l2-1.500v10.500H7zM10 1l2 1 1.500 9H10z" fill="#9a9a9a" />
              <path d="M0 5h14v6.500H0z" fill="#9a9a9a" />
            </svg>
            <span className="mt-[15px] text-[12.500px] text-[#b8b8b8] [writing-mode:vertical-rl]">My Blueprint</span>
          </div>
          <div className="w-[1329px]">
            <div className="flex h-[24px] text-[12.500px] text-[#b0b0b0]">
              <div className="flex w-[156px] items-center pb-[2px] pl-[5px]">
                <svg width="14" height="14" viewBox="0 0 14 14">
                  <path d="M0 0h5v5H0zM9.500 1.500H14V6H9.500zM9.500 9.500H14V14H9.500zM4.500 8h3v4h-3z" fill="#c0c0c0" />
                  <path d="M5 3l5 1M4 5l2 4 4 3" stroke="#888" fill="none" />
                </svg>
                <span className="ml-[7px]">Event Graph</span>
              </div>
              <div className="flex w-[153px] items-center rounded-t-[4px] border-t border-[#1763b5] bg-[#242424] pb-[2px] pl-[6px] text-[#d8d8d8]">
                <FnGlyph size={12} />
                <span className="ml-[7.500px] w-[105.500px]">Execute</span>
                <X size={11} strokeWidth={3} className="text-[#bbb]" />
              </div>
            </div>
            <GraphCanvas />
          </div>
          <div className="w-[5px]" />
          <Details />
        </div>
        <StatusBar />
      </div>
    </div>
  );
}

/* ------------------------------------------------------------------ */
/* Photo viewer shell                                                  */
/* ------------------------------------------------------------------ */

function TitleBar() {
  return (
    <div className="flex h-[106px] items-start rounded-t-[8px] bg-[radial-gradient(ellipse_900px_200px_at_12%_100%,#2c1c1f,transparent),linear-gradient(90deg,#281d26_0%,#261d24_45%,#232022_62%,#202123_85%,#212122_100%)]">
      <div className="flex h-[48px] w-[48px] items-center justify-center rounded-tl-[8px] bg-[#352a32]">
        <svg width="16" height="16" viewBox="0 0 16 16" fill="none" stroke="#fff" strokeWidth="1.200">
          <rect x="1" y="1" width="11.500" height="11.500" rx="2.500" />
          <path d="M4 15h7a4 4 0 0 0 4-4V4M2 11.500l4.500-4.300 4.800 4.500" />
          <circle cx="8.800" cy="4.500" r="1" />
        </svg>
      </div>
      <span className="ml-[20px] w-[687.500px] pt-[16px] font-['Noto_Sans','Open_Sans',sans-serif] text-[11.650px] leading-[18px] text-white">
        Capture d'écran 2024-03-05 234938.png
      </span>
      <div className="flex h-[48px] items-center gap-[24px] text-white">
        <svg width="16" height="16" viewBox="0 0 16 16" fill="none" stroke="#fff" strokeWidth="1.200">
          <path d="M14.500 6V2.500a1.500 1.500 0 0 0-1.500-1.500H2.500A1.500 1.500 0 0 0 1 2.500V13a1.500 1.500 0 0 0 1.500 1.500H6M2 13.500l5-5 2 2" />
          <circle cx="10.300" cy="4.700" r="1.300" />
          <path d="M8 15.300l.8-3L14 7.200l2 2-5.200 5.200z" fill="#fff" stroke="none" />
        </svg>
        <svg width="16" height="16" viewBox="0 0 16 16" fill="none" stroke="#fff" strokeWidth="1.200">
          <path d="M1.300 9.500A6.800 6.800 0 1 1 11.500 14M15 15.200h-3.800V11.500" />
          <circle cx="8" cy="8" r="1.500" />
        </svg>
        <Trash2 size={17} strokeWidth={1.700} className="-mx-[0.500px]" />
        <Heart size={18} strokeWidth={1.400} className="-mx-[1px] text-[#77727a]" />
        <Info size={18} strokeWidth={1.600} className="-mx-[1px]" />
        <Printer size={18} strokeWidth={1.700} className="-mx-[1px]" />
        <svg width="20" height="14" viewBox="0 0 20 14" className="-mx-[2px]">
          <path d="M5 13.500a5 5 0 0 1-1-9A6 6 0 0 1 15 4.500a4.600 4.600 0 0 1 .5 9z" fill="#1273cf" />
          <path d="M2 12.500 11.500 7l6.500 5.500c-.8.700-1.600 1-2.500 1H5c-1.200 0-2.300-.4-3-1z" fill="#28a8ea" />
          <path d="M11.500 7c2-2.500 5-2.800 7-.500 1.800 2 1.700 4.300-.5 6z" fill="#1490df" />
        </svg>
        <svg width="17" height="17" viewBox="0 0 17 17">
          <defs>
            <linearGradient id="clip" x1="0" y1="0" x2="1" y2="1">
              <stop offset="0" stopColor="#e78bf0" />
              <stop offset="1" stopColor="#4b45f0" />
            </linearGradient>
          </defs>
          <path d="M.500 5.500h16V16.500H.500z" fill="url(#clip)" />
          <path d="M.500 3.500 15.500.300l.8 3L.500 6z" fill="#8a3fd6" />
          <path d="M.500 6h16v2.500H.500z" fill="#c58af2" />
        </svg>
        <Ellipsis size={20} strokeWidth={2.800} className="-mx-[2.500px]" />
      </div>
      <svg width="104" height="34" viewBox="0 0 104 34" fill="none" stroke="#fff" className="mr-[17px] ml-auto">
        <path d="M1 15.500h10M47.500 11.500h9v9h-9zM93 11l10 10M103 11l-10 10" strokeWidth="1.200" />
      </svg>
    </div>
  );
}

function ViewerFooter() {
  return (
    <div className="flex h-[41px] items-center rounded-b-[8px] bg-[linear-gradient(90deg,#2a282c_0%,#2e2629_22%,#28272a_40%,#25282c_60%,#262729_100%)] pb-[1px] text-white">
      <svg width="16" height="13" viewBox="0 0 16 13" fill="none" stroke="#fff" strokeWidth="1.200" className="ml-[12px]">
        <rect x=".6" y=".6" width="14.800" height="11.300" rx="2" />
        <path d="M1 8.500h14M4 8.500V12M7 8.500V12M9.500 8.500V12M12 8.500V12" />
      </svg>
      <span className="ml-[14px] h-[24px] w-px bg-[#403d40]" />
      <span className="mr-[20px] ml-auto font-['Noto_Sans','Open_Sans',sans-serif] text-[13.500px] tracking-[0.100px]">96 %</span>
      <ZoomOut size={16} strokeWidth={1.600} className="mr-[23px] text-[#6f6f72]" />
      <ZoomIn size={17} strokeWidth={1.800} className="mr-[24px]" />
      <svg width="16" height="13" viewBox="0 0 16 13" fill="none" stroke="#6f6f72" strokeWidth="1.200" className="mr-[24px]">
        <rect x=".6" y=".6" width="14.800" height="11.800" rx="1.500" />
        <path d="M3.500 5V3.500h2M10.500 3.500h2V5M12.500 8v1.500h-2M5.500 9.500h-2V8" />
      </svg>
      <div className="mr-[14px] flex h-[13px] w-[16px] items-center justify-center rounded-[3px] border border-white text-[8px] leading-none font-bold">1:1</div>
      <span className="mr-[14px] h-[24px] w-px bg-[#3c3c3f]" />
      <svg width="15" height="15" viewBox="0 0 15 15" fill="none" stroke="#fff" strokeWidth="1.300" className="mr-[13px]">
        <path d="M1 14 14 1M8.500 1H14v5.500M1 8.500V14h5.500" />
      </svg>
    </div>
  );
}

export default function App() {
  return (
    <div className="h-[1242px] w-[1849px] overflow-hidden bg-[#2a2c2a]">
      <div className="flex h-[1242px] w-[1849px] flex-col rounded-[8px] border border-[#454545] bg-[linear-gradient(90deg,#1e1e24_0%,#211d20_18%,#241d1f_26%,#1f2123_36%,#1c2026_65%,#1f2023_82%,#1c1f26_100%)]">
        <TitleBar />
        <Editor />
        <div className="flex-1" />
        <ViewerFooter />
      </div>
    </div>
  );
}
